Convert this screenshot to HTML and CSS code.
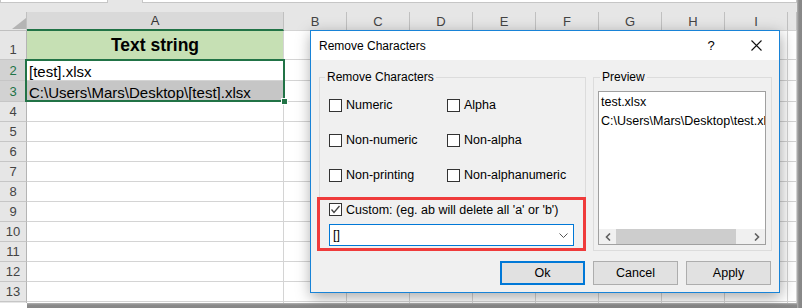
FILE: index.html
```html
<!DOCTYPE html>
<html lang="en">
<head>
    <meta charset="UTF-8">
    <meta name="viewport" content="width=device-width, initial-scale=1.0">
    <title>Remove Characters</title>
    <link rel="stylesheet" href="styles.css">
</head>
<body>
    <div class="screen">
        <div class="sheet">
            <div class="formula-edge">
                <span class="edge-name"></span>
                <span class="edge-fx"></span>
                <span class="edge-bar"></span>
            </div>

            <div class="grid" id="grid">
                <div class="corner">
                    <svg width="14" height="11" viewBox="0 0 14 11"><path d="M14 0 L14 11 L0 11 Z" fill="#b4b4b4"/></svg>
                </div>
                <div class="col-head selected">A</div>
                <div class="col-head">B</div>
                <div class="col-head">C</div>
                <div class="col-head">D</div>
                <div class="col-head">E</div>
                <div class="col-head">F</div>
                <div class="col-head">G</div>
                <div class="col-head">H</div>
                <div class="col-head">I</div>
                <div class="col-head"></div>

                <div class="row-head">1</div>
                <div class="cell title-cell">Text string</div>
                <div class="cell"></div><div class="cell"></div><div class="cell"></div><div class="cell"></div><div class="cell"></div>
                <div class="cell"></div><div class="cell"></div><div class="cell"></div><div class="cell"></div>

                <div class="row-head selected">2</div>
                <div class="cell">[test].xlsx</div>
                <div class="cell"></div><div class="cell"></div><div class="cell"></div><div class="cell"></div><div class="cell"></div>
                <div class="cell"></div><div class="cell"></div><div class="cell"></div><div class="cell"></div>

                <div class="row-head selected">3</div>
                <div class="cell in-range">C:\Users\Mars\Desktop\[test].xlsx</div>
                <div class="cell"></div><div class="cell"></div><div class="cell"></div><div class="cell"></div><div class="cell"></div>
                <div class="cell"></div><div class="cell"></div><div class="cell"></div><div class="cell"></div>
            </div>

            <div class="selection"><span class="fill-handle"></span></div>
        </div>
        <div class="shadow-right"></div>
        <div class="shadow-bottom"></div>

        <div class="dialog">
            <div class="titlebar">
                <span class="title">Remove Characters</span>
                <span class="help">?</span>
                <span class="close">
                    <svg width="11" height="11" viewBox="0 0 11 11"><path d="M0.5 0.5 L10.5 10.5 M10.5 0.5 L0.5 10.5" stroke="#111" stroke-width="1.1"/></svg>
                </span>
            </div>

            <div class="dialog-body">
                <div class="groups">
                    <div class="group group-remove">
                        <span class="group-title">Remove Characters</span>
                        <div class="options">
                            <label class="check"><span class="box"></span>Numeric</label>
                            <label class="check"><span class="box"></span>Alpha</label>
                            <label class="check"><span class="box"></span>Non-numeric</label>
                            <label class="check"><span class="box"></span>Non-alpha</label>
                            <label class="check"><span class="box"></span>Non-printing</label>
                            <label class="check"><span class="box"></span>Non-alphanumeric</label>
                        </div>
                        <div class="custom">
                            <label class="check">
                                <span class="box">
                                    <svg width="11" height="11" viewBox="0 0 11 11"><path d="M1.5 5.5 L4 8.5 L9.5 2" fill="none" stroke="#444" stroke-width="1.3"/></svg>
                                </span>Custom: (eg. ab will delete all 'a' or 'b')
                            </label>
                            <div class="combo">
                                <span>[]</span>
                                <svg width="9" height="5" viewBox="0 0 9 5"><path d="M0.5 0.5 L4.5 4.5 L8.5 0.5" fill="none" stroke="#555" stroke-width="1"/></svg>
                            </div>
                        </div>
                    </div>

                    <div class="group group-preview">
                        <span class="group-title">Preview</span>
                        <div class="listbox">
                            <div class="list-item">test.xlsx</div>
                            <div class="list-item">C:\Users\Mars\Desktop\test.xlsx</div>
                            <div class="hscroll">
                                <span class="arrow">
                                    <svg width="6" height="8" viewBox="0 0 6 8"><path d="M5 0.5 L1.5 4 L5 7.5" fill="none" stroke="#606060" stroke-width="1.6"/></svg>
                                </span>
                                <span class="thumb"></span>
                                <span class="track"></span>
                                <span class="arrow">
                                    <svg width="6" height="8" viewBox="0 0 6 8"><path d="M1 0.5 L4.5 4 L1 7.5" fill="none" stroke="#606060" stroke-width="1.6"/></svg>
                                </span>
                            </div>
                        </div>
                    </div>
                </div>

                <div class="buttons">
                    <button type="button" class="btn btn-default">Ok</button>
                    <button type="button" class="btn">Cancel</button>
                    <button type="button" class="btn">Apply</button>
                </div>
            </div>
        </div>
    </div>

    <script>
        // Empty rows below the data; the last one is only a sliver, so no number
        const grid = document.getElementById('grid');
        for (let r = 4; r <= 14; r++) {
            let html = `<div class="row-head">${r < 14 ? r : ''}</div>`;
            for (let c = 0; c < 10; c++) {
                html += '<div class="cell"></div>';
            }
            grid.insertAdjacentHTML('beforeend', html);
        }
    </script>
</body>
</html>
```

FILE: styles.css
```css
* {
    box-sizing: border-box;
}
body {
    margin: 0;
    background: #fff;
    font-family: "Liberation Sans", Arial, sans-serif;
    overflow: hidden;
}
.screen {
    position: relative;
    display: grid;
    grid-template-columns: 797px 5px;
    grid-template-rows: 303px 5px;
}

/* spreadsheet */
.sheet {
    position: relative;
    height: 303px;
    overflow: hidden;
    background: #e6e6e6;
}
.formula-edge {
    display: flex;
    gap: 3px;
    height: 12px;
}
.formula-edge span {
    height: 3px;
    background: #fff;
    border: 1px solid #c6c6c6;
    border-top: none;
}
.edge-name {
    width: 108px;
}
.edge-fx {
    width: 28px;
    background: transparent !important;
    border: none !important;
}
.edge-bar {
    flex: 1;
}
.grid {
    display: grid;
    grid-template-columns: 27px 257px repeat(8, 63px) 1fr;
    grid-template-rows: 19px 29px 21px 21px;
    grid-auto-rows: 20px;
    background: #fff;
}
.corner {
    background: #e6e6e6;
    border-right: 1px solid #c0c0c0;
    border-bottom: 1px solid #c0c0c0;
    display: flex;
    justify-content: flex-end;
    align-items: flex-end;
    padding: 0 0 1px 0;
}
.col-head {
    background: #e6e6e6;
    border-right: 1px solid #c0c0c0;
    border-bottom: 1px solid #d4d4d4;
    display: flex;
    justify-content: center;
    align-items: center;
    font-size: 13px;
    color: #444;
}
.col-head.selected {
    background: #d9d9d9;
    border-bottom: 2px solid #217346;
    color: #333;
}
.row-head {
    background: #e6e6e6;
    border-right: 1px solid #b4b4b4;
    border-bottom: 1px solid #c6c6c6;
    display: flex;
    justify-content: center;
    align-items: flex-end;
    font-size: 13px;
    line-height: 16px;
    padding-bottom: 1px;
    color: #444;
}
.row-head.selected {
    background: #d2d2d2;
    color: #217346;
}
.cell {
    border-right: 1px solid #d4d4d4;
    border-bottom: 1px solid #d4d4d4;
    display: flex;
    align-items: flex-end;
    padding: 0 2px;
    font-size: 15px;
    line-height: 17px;
    white-space: nowrap;
    color: #000;
}
.title-cell {
    background: #c6e0b4;
    justify-content: center;
    align-items: center;
    font-weight: bold;
    font-size: 17.5px;
}
.in-range {
    background: #c6c6c6;
}
.selection {
    position: absolute;
    left: 25px;
    top: 59px;
    width: 260px;
    height: 43px;
    border: 2px solid #217346;
}
.fill-handle {
    position: absolute;
    right: -5px;
    bottom: -5px;
    width: 7px;
    height: 7px;
    background: #217346;
    border: 1px solid #fff;
}
.shadow-right {
    grid-row: 1 / 3;
    grid-column: 2;
    background: linear-gradient(to right, #b4b4b4, #8a8a8a 40%, #878787);
}
.shadow-bottom {
    grid-row: 2;
    grid-column: 1;
    margin-left: 27px;
    background: linear-gradient(to bottom, #b4b4b4, #8a8a8a 40%, #878787);
}

/* dialog */
.dialog {
    position: absolute;
    left: 310px;
    top: 30px;
    width: 470px;
    border: 1px solid #1883d7;
    background: #f0f0f0;
    box-shadow: 1px 4px 14px rgba(0, 0, 0, 0.35);
    font-size: 12px;
    color: #000;
}
.titlebar {
    height: 29px;
    background: #fff;
    display: flex;
    align-items: center;
}
.title {
    flex: 1;
    padding-left: 8px;
}
.help {
    width: 46px;
    text-align: center;
    font-size: 13px;
}
.close {
    width: 45px;
    display: flex;
    justify-content: center;
}
.dialog-body {
    padding: 17px 7px 7px 8px;
    font-size: 12.5px;
}
.groups {
    display: flex;
    gap: 7px;
}
.group {
    border: 1px solid #dcdcdc;
}
.group-remove {
    width: 267px;
}
.group-preview {
    width: 179px;
    display: flex;
    flex-direction: column;
    padding: 0 5px 5px 4px;
}
.group-title {
    display: block;
    width: max-content;
    margin: -9px 0 0 5px;
    padding: 0 2px;
    background: #f0f0f0;
    line-height: 17px;
    font-size: 12px;
}
.group-preview .group-title {
    margin-left: 2px;
}
.options {
    display: grid;
    grid-template-columns: 118px auto;
    row-gap: 15px;
    margin: 9px 0 0 9px;
}
.check {
    display: flex;
    align-items: center;
    gap: 4px;
    height: 20px;
    white-space: nowrap;
}
.box {
    flex: none;
    width: 13px;
    height: 13px;
    border: 1px solid #333;
    background: #fff;
    display: flex;
}
.custom {
    margin: 12px -1px -1px -3px;
    border: 3px solid #ef3b3b;
    padding: 0 9px 2px 9px;
}
.custom .check {
    height: 19px;
}
.combo {
    margin-top: 5px;
    height: 22px;
    border: 1px solid #0078d7;
    background: #fff;
    display: flex;
    align-items: center;
    justify-content: space-between;
    padding: 0 5px 0 3px;
}
.listbox {
    flex: 1;
    margin-top: 5px;
    background: #fff;
    border: 1px solid #a0a0a0;
    display: flex;
    flex-direction: column;
    overflow: hidden;
}
.list-item {
    padding-left: 2px;
    line-height: 19px;
    white-space: nowrap;
}
.list-item:first-child {
    margin-top: 1px;
}
.hscroll {
    margin-top: auto;
    height: 15px;
    display: flex;
    background: #f0f0f0;
}
.arrow {
    width: 17px;
    display: flex;
    align-items: center;
    justify-content: center;
}
.thumb {
    width: 120px;
    background: #cdcdcd;
}
.track {
    flex: 1;
}
.buttons {
    display: flex;
    justify-content: flex-end;
    gap: 8px;
    margin: 10px 1px 0 0;
}
.btn {
    width: 85px;
    height: 24px;
    padding: 0;
    border: 1px solid #adadad;
    background: #e1e1e1;
    font: inherit;
    color: #000;
}
.btn-default {
    border: 2px solid #0078d7;
}
```
